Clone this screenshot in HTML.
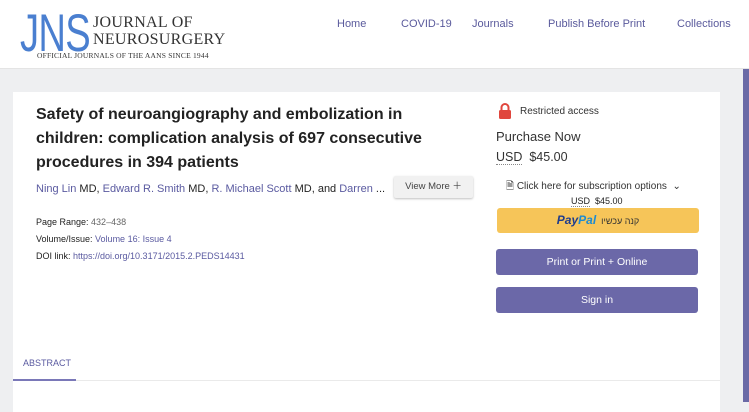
<!DOCTYPE html>
<html><head><meta charset="utf-8"><style>
*{margin:0;padding:0;box-sizing:border-box}
body{width:749px;height:402px;overflow:hidden;background:#eeeff1;font-family:"Liberation Sans",sans-serif;position:relative;color:#222}
.hdr{position:absolute;left:0;top:0;width:749px;height:69px;background:#fff;border-bottom:1px solid #e4e4e4}
.nav{position:absolute;top:18px;font-size:11px;color:#5a5a9c}
.card{position:absolute;left:13px;top:92px;width:707px;height:320px;background:#fff}
.strip{position:absolute;left:743px;top:69px;width:6px;height:333px;background:#6a6aa6}
.a{position:absolute;white-space:nowrap}
.lk{color:#5a5aa0}
.btn{position:absolute;left:496px;width:202px;height:26px;background:#6b68a8;color:#fff;font-size:10.5px;text-align:center;line-height:26px;border-radius:3px}
</style></head><body>
<div class="hdr">
 <div class="a" style="left:20px;top:7px;font-family:'Liberation Sans',sans-serif;font-size:53px;color:#4a7fd0;line-height:53px;transform:scaleX(0.72);transform-origin:left top;letter-spacing:-1px">JNS</div>
 <div class="a" style="left:93px;top:14px;font-family:'Liberation Serif',serif;font-size:16px;color:#333;line-height:17px;letter-spacing:0.3px">JOURNAL OF<br>NEUROSURGERY</div>
 <div class="a" style="left:37px;top:51px;font-family:'Liberation Serif',serif;font-size:7.5px;color:#333;letter-spacing:0.2px">OFFICIAL JOURNALS OF THE AANS SINCE 1944</div>
 <div class="nav" style="left:337px">Home</div>
 <div class="nav" style="left:401px">COVID-19</div>
 <div class="nav" style="left:472px">Journals</div>
 <div class="nav" style="left:548px">Publish Before Print</div>
 <div class="nav" style="left:677px">Collections</div>
</div>
<div class="strip"></div>
<div class="card"></div>
<div class="a" style="left:36px;top:103px;font-size:16px;font-weight:bold;line-height:24px;color:#222;letter-spacing:0px">Safety of neuroangiography and embolization in<br>children: complication analysis of 697 consecutive<br>procedures in 394 patients</div>
<div class="a" style="left:36px;top:183px;font-size:11px"><span class="lk">Ning Lin</span> MD, <span class="lk">Edward R. Smith</span> MD, <span class="lk">R. Michael Scott</span> MD, and <span class="lk">Darren</span> ...</div>
<div class="a" style="left:394px;top:176px;width:79px;height:22px;background:#f1f1f1;border-radius:2px;box-shadow:0 1px 2px rgba(0,0,0,.25);font-size:9.5px;color:#444;line-height:22px;text-align:center">View More ＋</div>
<div class="a" style="left:36px;top:214px;font-size:9px;line-height:17px">Page Range: <span style="color:#666">432–438</span><br>Volume/Issue: <span class="lk">Volume 16: Issue 4</span><br>DOI link: <span class="lk">https://doi.org/10.3171/2015.2.PEDS14431</span></div>
<svg class="a" style="left:498px;top:103px" width="14" height="16" viewBox="0 0 14 16"><path d="M3.5 7V4.5a3.5 3.5 0 0 1 7 0V7" fill="none" stroke="#e0463d" stroke-width="2"/><rect x="1" y="7" width="12" height="9" rx="1.5" fill="#e0463d"/></svg>
<div class="a" style="left:520px;top:106px;font-size:10px;color:#333">Restricted access</div>
<div class="a" style="left:496px;top:129px;font-size:13px;color:#333">Purchase Now</div>
<div class="a" style="left:496px;top:150px;font-size:12.5px;color:#333"><span style="border-bottom:1px dotted #888">USD</span>&nbsp; $45.00</div>
<div class="a" style="left:506px;top:179px;font-size:10px;color:#333">🗎 Click here for subscription options &nbsp;⌄</div>
<div class="a" style="left:571px;top:196px;font-size:9px;color:#222"><span style="border-bottom:1px dotted #888">USD</span>&nbsp; $45.00</div>
<div class="a" style="left:497px;top:208px;width:202px;height:25px;background:#f6c559;border-radius:3px;text-align:center;line-height:25px;font-size:9px;color:#333"><b style="font-style:italic;font-size:12px;color:#1f3c8c">Pay<span style="color:#1d8bd1">Pal</span></b>&nbsp; קנה עכשיו</div>
<div class="btn" style="top:249px">Print or Print + Online</div>
<div class="btn" style="top:287px">Sign in</div>
<div class="a" style="left:23px;top:358px;font-size:9px;color:#5a5aa0">ABSTRACT</div>
<div class="a" style="left:13px;top:380px;width:707px;height:1px;background:#eaeaea"></div>
<div class="a" style="left:13px;top:379px;width:63px;height:2px;background:#7a78b8"></div>
</body></html>
